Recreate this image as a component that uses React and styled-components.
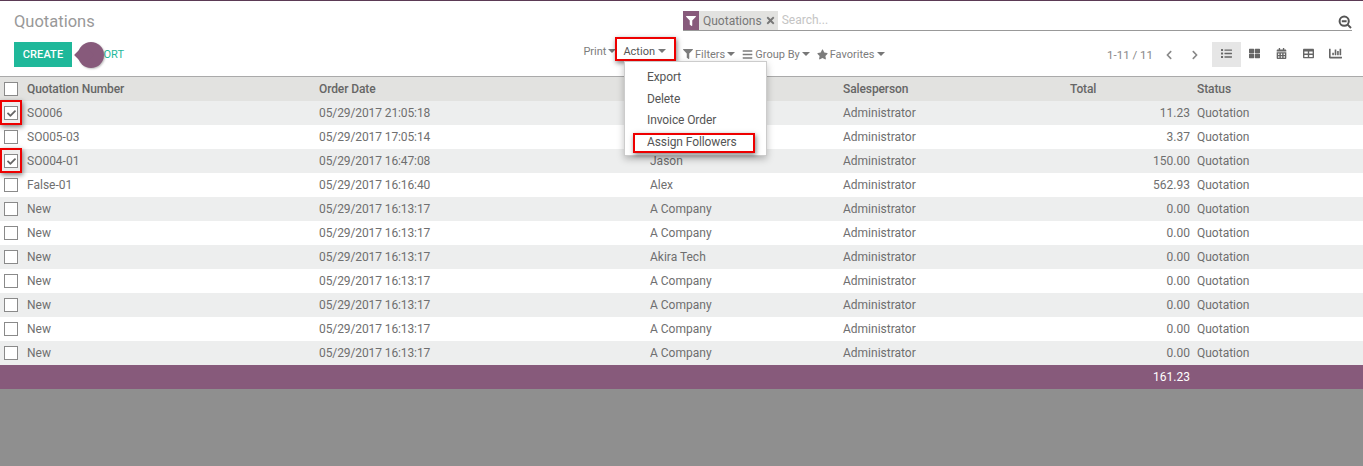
import React from "react";
import styled, { createGlobalStyle } from "styled-components";
import { FaFilter, FaTimes, FaBars, FaStar, FaCheck, FaThLarge, FaCalendarAlt, FaTable, FaChartBar, FaList, FaChevronLeft, FaChevronRight } from "react-icons/fa";

const GlobalStyle = createGlobalStyle`
	html, body {
		margin: 0;
		padding: 0;
		background: #8f8f8f;
		font-family: Roboto, "Liberation Sans", sans-serif;
		font-size: 12px;
		color: #666;
	}
`;

const Page = styled.div`
	width: 1363px;
	height: 466px;
	overflow: hidden;
	position: relative;
	background: #8f8f8f;
`;

const Panel = styled.div`
	background: #fff;
	border-top: 1px solid #5b3a55;
	border-bottom: 1px solid #aaa;
	height: 75px;
	display: grid;
	grid-template-columns: 683px 1fr;
	grid-template-rows: 41px 34px;
`;

const Title = styled.h1`
	margin: 0;
	padding: 11px 0 0 14px;
	font-size: 16.5px;
	line-height: 20px;
	font-weight: 400;
	color: #999;
`;

const SearchBar = styled.div`
	margin: 10px 11px 0 0;
	height: 19px;
	border-bottom: 1px solid #999;
	display: flex;
	align-items: flex-start;
	position: relative;
`;

const Facet = styled.div`
	display: flex;
	align-items: center;
	height: 19px;
	background: #e2e2e0;
	font-size: 12px;
	color: #777;
`;

const FacetIcon = styled.span`
	width: 16px;
	height: 19px;
	background: #875a7b;
	color: #fff;
	display: flex;
	align-items: center;
	justify-content: center;
	font-size: 10px;
	margin-right: 4px;
`;

const FacetClose = styled.span`
	display: flex;
	margin: 0 2px 0 3px;
	font-size: 11px;
	color: #777;
`;

const SearchHint = styled.span`
	margin-left: 4px;
	line-height: 19px;
	color: #c4c4c4;
	font-size: 12px;
`;

const SearchIcon = styled.svg`
	position: absolute;
	right: 0;
	top: 4px;
	width: 14px;
	height: 14px;
`;

const LeftTools = styled.div`
	display: flex;
	justify-content: space-between;
	padding: 0 17px 0 14px;
	position: relative;
`;

const Buttons = styled.div`
	display: flex;
	align-items: flex-start;
	position: relative;
`;

const CreateButton = styled.button`
	width: 58px;
	height: 25px;
	border: 0;
	padding: 0;
	background: #1fb89a;
	color: #fff;
	font: 500 11px Roboto, sans-serif;
	letter-spacing: 0.1px;
`;

const ImportButton = styled.button`
	height: 25px;
	border: 0;
	padding: 0 0 0 12px;
	background: transparent;
	color: #1fb89a;
	font: 400 11px Roboto, sans-serif;
`;

const Blob = styled.span`
	position: absolute;
	left: 64px;
	top: 0;
	width: 26px;
	height: 26px;
	background: #875a7b;
	border-radius: 50%;
	box-shadow: 1px 1px 2px rgba(0, 0, 0, 0.25);
	&::before {
		content: "";
		position: absolute;
		left: -1px;
		top: 6px;
		width: 14px;
		height: 14px;
		background: #875a7b;
		transform: rotate(45deg);
	}
`;

const Sidebar = styled.div`
	display: flex;
	gap: 7px;
	padding-top: 1px;
	height: 19px;
`;

const Menu = styled.span`
	display: flex;
	align-items: center;
	gap: 2px;
	height: 16px;
	font-size: 11px;
	color: ${(p) => (p.$dark ? "#555" : "#7c7c7c")};
	white-space: nowrap;
`;

const Caret = styled.i`
	display: inline-block;
	width: 0;
	height: 0;
	border-left: 4px solid transparent;
	border-right: 4px solid transparent;
	border-top: 4px solid #777;
	margin-left: ${(p) => p.$gap || 0}px;
`;

const RightTools = styled.div`
	display: flex;
	align-items: flex-start;
	padding-right: 14px;
`;

const Filters = styled.div`
	display: flex;
	gap: 7px;
	padding-top: 4px;
`;

const Pager = styled.div`
	margin-left: auto;
	display: flex;
	align-items: center;
	height: 25px;
	font-size: 11.5px;
	color: #888;
`;

const PagerArrows = styled.span`
	display: flex;
	gap: 16px;
	margin: 0 12px 0 11px;
	color: #888;
	font-size: 10px;
`;

const Views = styled.div`
	display: flex;
`;

const ViewButton = styled.span`
	box-sizing: border-box;
	width: ${(p) => (p.$active ? 29 : 27)}px;
	height: 25px;
	padding-bottom: 3px;
	display: flex;
	align-items: center;
	justify-content: center;
	font-size: ${(p) => p.$size || 11}px;
	color: #666;
	background: ${(p) => (p.$active ? "#e6e6e6" : "transparent")};
`;

const Row = styled.div`
	display: grid;
	grid-template-columns: 27px 292px 331px 193px 227px 127px 1fr;
	height: 24px;
	align-items: center;
	font-size: 12px;
	color: #6f6f6f;
	background: ${(p) => (p.$odd ? "#edeeee" : "#fff")};
`;

const HeadRow = styled(Row)`
	background: #e2e2e0;
	font-weight: 500;
	color: #666;
	letter-spacing: -0.1px;
`;

const FootRow = styled(Row)`
	background: #875a7b;
	color: #fff;
`;

const Amount = styled.span`
	text-align: right;
	padding-right: 7px;
`;

const DateCell = styled.span`
	letter-spacing: -0.1px;
`;

const CheckCell = styled.span`
	padding-left: 4px;
	position: relative;
	height: 24px;
	display: flex;
	align-items: center;
`;

const Check = styled.span`
	width: 12px;
	height: 12px;
	border: 1px solid #8a8a8a;
	background: #fff;
	display: flex;
	align-items: center;
	justify-content: center;
	font-size: 9px;
	color: #666;
`;

const Highlight = styled.span`
	position: absolute;
	box-sizing: border-box;
	border: 2px solid #ee0000;
	box-shadow: 1px 2px 5px rgba(0, 0, 0, 0.5);
	pointer-events: none;
`;

const CheckMark = styled(Highlight)`
	left: 0;
	top: -1px;
	width: 22px;
	height: 25px;
`;

const ActionMark = styled(Highlight)`
	left: 615px;
	top: -5px;
	width: 61px;
	height: 24px;
`;

const Dropdown = styled.div`
	position: absolute;
	left: 624px;
	top: 61px;
	width: 143px;
	height: 95px;
	box-sizing: border-box;
	padding-top: 5px;
	background: #fff;
	border: 1px solid #ccc;
	box-shadow: 0 3px 7px rgba(0, 0, 0, 0.25);
	z-index: 2;
`;

const DropItem = styled.div`
	height: 21.5px;
	line-height: 21px;
	padding-left: 22px;
	font-size: 12px;
	letter-spacing: -0.1px;
	color: #555;
`;

const FollowMark = styled(Highlight)`
	left: 8px;
	top: 71px;
	width: 122px;
	height: 20px;
`;

const rows = [
	["SO006", "05/29/2017 21:05:18", "", "11.23", true],
	["SO005-03", "05/29/2017 17:05:14", "", "3.37"],
	["SO004-01", "05/29/2017 16:47:08", "Jason", "150.00", true],
	["False-01", "05/29/2017 16:16:40", "Alex", "562.93"],
	["New", "05/29/2017 16:13:17", "A Company", "0.00"],
	["New", "05/29/2017 16:13:17", "A Company", "0.00"],
	["New", "05/29/2017 16:13:17", "Akira Tech", "0.00"],
	["New", "05/29/2017 16:13:17", "A Company", "0.00"],
	["New", "05/29/2017 16:13:17", "A Company", "0.00"],
	["New", "05/29/2017 16:13:17", "A Company", "0.00"],
	["New", "05/29/2017 16:13:17", "A Company", "0.00"],
];

const App = () => {
	return (
		<Page>
			<GlobalStyle />
			<Panel>
				<Title>Quotations</Title>
				<SearchBar>
					<Facet>
						<FacetIcon><FaFilter /></FacetIcon>
						Quotations
						<FacetClose><FaTimes /></FacetClose>
					</Facet>
					<SearchHint>Search...</SearchHint>
					<SearchIcon viewBox="0 0 14 14" fill="none" stroke="#555" strokeWidth="2">
						<circle cx="6.2" cy="6.2" r="4.6" />
						<path d="M3.8 6.2h4.8M9.6 9.6l3.4 3.4" />
					</SearchIcon>
				</SearchBar>
				<LeftTools>
					<Buttons>
						<CreateButton>CREATE</CreateButton>
						<ImportButton>IMPORT</ImportButton>
						<Blob />
					</Buttons>
					<Sidebar>
						<Menu>Print<Caret /></Menu>
						<Menu $dark>Action<Caret $gap={1} /></Menu>
					</Sidebar>
					<ActionMark />
				</LeftTools>
				<RightTools>
					<Filters>
						<Menu><FaFilter size={10} />Filters<Caret /></Menu>
						<Menu><FaBars size={11} />Group By<Caret /></Menu>
						<Menu><FaStar size={11} />Favorites<Caret /></Menu>
					</Filters>
					<Pager>
						1-11 / 11
						<PagerArrows><FaChevronLeft /><FaChevronRight /></PagerArrows>
					</Pager>
					<Views>
						<ViewButton $active><FaList /></ViewButton>
						<ViewButton><FaThLarge /></ViewButton>
						<ViewButton><FaCalendarAlt /></ViewButton>
						<ViewButton><FaTable /></ViewButton>
						<ViewButton $size={13}><FaChartBar /></ViewButton>
					</Views>
				</RightTools>
			</Panel>
			<Dropdown>
				<DropItem>Export</DropItem>
				<DropItem>Delete</DropItem>
				<DropItem>Invoice Order</DropItem>
				<DropItem>Assign Followers</DropItem>
				<FollowMark />
			</Dropdown>
			<HeadRow>
				<CheckCell><Check /></CheckCell>
				<span>Quotation Number</span>
				<span>Order Date</span>
				<span />
				<span>Salesperson</span>
				<span>Total</span>
				<span>Status</span>
			</HeadRow>
			{rows.map((r, idx) => (
				<Row key={idx} $odd={idx % 2 === 0}>
					<CheckCell>
						<Check>{r[4] && <FaCheck />}</Check>
						{r[4] && <CheckMark />}
					</CheckCell>
					<span>{r[0]}</span>
					<DateCell>{r[1]}</DateCell>
					<span>{r[2]}</span>
					<span>Administrator</span>
					<Amount>{r[3]}</Amount>
					<span>Quotation</span>
				</Row>
			))}
			<FootRow>
				<span />
				<span />
				<span />
				<span />
				<span />
				<Amount>161.23</Amount>
				<span />
			</FootRow>
		</Page>
	);
};

export default App;
